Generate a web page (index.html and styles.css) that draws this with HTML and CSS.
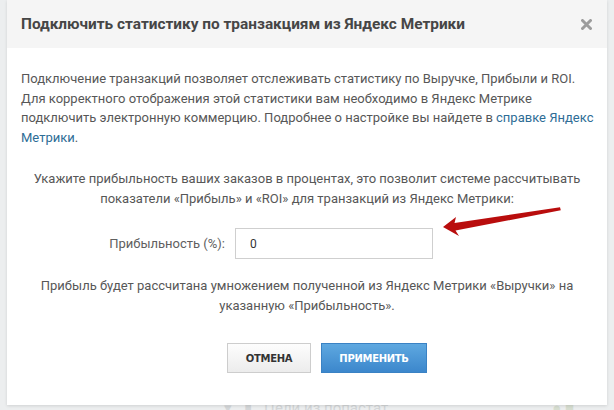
FILE: index.html
```html
<!DOCTYPE html>
<html lang="ru">
<head>
<meta charset="utf-8">
<link rel="stylesheet" href="styles.css">
</head>
<body>
<div class="page">
  <div class="page-row">
    <span class="pg-ico">▾</span>
    <span class="pg-ico">▮</span>
    <span class="pg-text">Цели из попастат</span>
    <span class="pg-right">● ■</span>
  </div>
</div>
<div class="modal">
  <div class="modal-header">
    <h1 class="modal-title">Подключить статистику по транзакциям из Яндекс Метрики</h1>
    <svg class="close" width="11" height="11" viewBox="0 0 11 11">
      <path d="M1.5 1.5 L9.5 9.5 M9.5 1.5 L1.5 9.5" stroke="#9c9c9c" stroke-width="3" stroke-linecap="round"/>
    </svg>
  </div>
  <div class="modal-body">
    <p class="intro">Подключение транзакций позволяет отслеживать статистику по Выручке, Прибыли и ROI.<br>Для корректного отображения этой статистики вам необходимо в Яндекс Метрике<br>подключить электронную коммерцию. Подробнее о настройке вы найдете в <a class="link" href="#">справке Яндекс<br>Метрики</a>.</p>
    <p class="center first">Укажите прибыльность ваших заказов в процентах, это позволит системе рассчитывать<br>показатели «Прибыль» и «ROI» для транзакций из Яндекс Метрики:</p>
    <div class="field">
      <label class="field-label">Прибыльность (%):</label>
      <input class="field-input" type="text" value="0">
    </div>
    <p class="center note">Прибыль будет рассчитана умножением полученной из Яндекс Метрики «Выручки» на<br>указанную «Прибыльность».</p>
    <div class="actions">
      <button class="btn btn-cancel">Отмена</button>
      <button class="btn btn-apply">Применить</button>
    </div>
  </div>
  <svg class="arrow" width="130" height="36" viewBox="0 0 130 36">
    <path d="M1 21 L14 11 L12.5 17 L118 1.2 L118.8 4.2 L13.5 24.5 L17 30 Z" fill="#b90d0d"/>
  </svg>
</div>
</body>
</html>
```
FILE: styles.css
```css
* { box-sizing: border-box; }
html, body { margin: 0; padding: 0; }
body {
  width: 614px;
  height: 410px;
  overflow: hidden;
  background: #eceeef;
  font-family: Roboto, "Open Sans", sans-serif;
  position: relative;
}
.page {
  height: 410px;
  display: flex;
  flex-direction: column;
  justify-content: flex-end;
}
.page-row {
  height: 9px;
  overflow: hidden;
  display: flex;
  align-items: flex-start;
  padding-left: 224px;
  gap: 12px;
  color: #d3d6d8;
  font-size: 15px;
  line-height: 14px;
}
.pg-right { margin-left: auto; margin-right: 40px; color: #d6ddd0; }
.modal {
  position: absolute;
  left: 7px;
  top: 0;
  width: 600px;
  height: 405px;
  background: #fff;
  box-shadow: 0 1px 3px rgba(0,0,0,0.12);
}
.modal-header {
  height: 48px;
  background: #f5f5f5;
  display: flex;
  align-items: center;
  justify-content: space-between;
  padding: 0 15px 0 14px;
}
.modal-title {
  margin: 0;
  font-size: 15.4px;
  font-weight: 700;
  color: #464646;
}
.close { display: block; }
.modal-body {
  padding: 21px 14px 0 14px;
  color: #575757;
  font-size: 13px;
  line-height: 19.5px;
}
.modal-body p { margin: 0; white-space: nowrap; }
.link { color: #2e6d96; text-decoration: none; }
.center { text-align: center; }
.first { margin-top: 22px !important; }
.field {
  margin-top: 20px;
  display: flex;
  align-items: center;
  gap: 10px;
}
.field-label {
  width: 204px;
  text-align: right;
  color: #606060;
  font-size: 13px;
}
.field-input {
  width: 198px;
  height: 31px;
  border: 1px solid #cfcfcf;
  padding: 0 14px;
  font-family: inherit;
  font-size: 12px;
  color: #333;
  outline: none;
}
.note { margin-top: 17px !important; }
.actions {
  margin-top: 28px;
  display: flex;
  justify-content: center;
  gap: 10px;
  padding-left: 40px;
}
.btn {
  height: 30px;
  font-family: "DejaVu Sans", sans-serif;
  font-weight: 700;
  font-size: 10px;
  text-transform: uppercase;
  letter-spacing: -0.3px;
  cursor: pointer;
}
.btn-cancel {
  width: 84px;
  background: linear-gradient(#fdfdfd, #ececec);
  border: 1px solid #cdcdcd;
  color: #333;
}
.btn-apply {
  width: 106px;
  background: linear-gradient(#5ea8e0, #3c87cc);
  border: 1px solid #3a82c4;
  color: #fff;
}
.arrow {
  position: absolute;
  left: 435px;
  top: 206px;
}
```
